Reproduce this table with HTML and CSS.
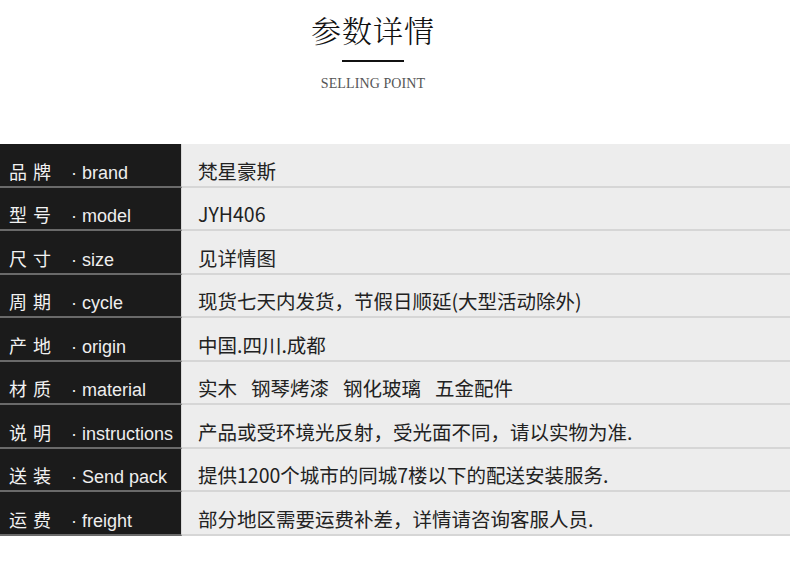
FILE: index.html
```html
<!DOCTYPE html>
<html lang="zh-CN">
<head>
<meta charset="utf-8">
<title>参数详情</title>
<link rel="stylesheet" href="styles.css">
</head>
<body>
<header class="head">
  <h1 class="title">参数详情</h1>
  <div class="rule"></div>
  <p class="sub">SELLING POINT</p>
</header>
<section class="specs">
  <div class="row"><div class="key"><span class="cn">品牌</span><span class="en">· brand</span></div><div class="val">梵星豪斯</div></div>
  <div class="row"><div class="key"><span class="cn">型号</span><span class="en">· model</span></div><div class="val">JYH406</div></div>
  <div class="row"><div class="key"><span class="cn">尺寸</span><span class="en">· size</span></div><div class="val">见详情图</div></div>
  <div class="row"><div class="key"><span class="cn">周期</span><span class="en">· cycle</span></div><div class="val">现货七天内发货，节假日顺延(大型活动除外)</div></div>
  <div class="row"><div class="key"><span class="cn">产地</span><span class="en">· origin</span></div><div class="val">中国.四川.成都</div></div>
  <div class="row"><div class="key"><span class="cn">材质</span><span class="en">· material</span></div><div class="val"><span class="item">实木</span><span class="item">钢琴烤漆</span><span class="item">钢化玻璃</span><span class="item">五金配件</span></div></div>
  <div class="row"><div class="key"><span class="cn">说明</span><span class="en">· instructions</span></div><div class="val">产品或受环境光反射，受光面不同，请以实物为准.</div></div>
  <div class="row"><div class="key"><span class="cn">送装</span><span class="en">· Send pack</span></div><div class="val">提供1200个城市的同城7楼以下的配送安装服务.</div></div>
  <div class="row"><div class="key"><span class="cn">运费</span><span class="en">· freight</span></div><div class="val">部分地区需要运费补差，详情请咨询客服人员.</div></div>
</section>
</body>
</html>
```

FILE: styles.css
```css
* { box-sizing: border-box; }
html, body { margin: 0; padding: 0; background: #fff; }
body {
  width: 790px;
  font-family: "Liberation Sans", "Noto Sans CJK SC", sans-serif;
}
.head {
  width: 746px;
  display: flex;
  flex-direction: column;
  align-items: center;
  padding-top: 12px;
}
.title {
  margin: 0;
  font-family: "Noto Serif CJK SC", "Noto Sans CJK SC", serif;
  font-weight: 300;
  font-size: 30px;
  line-height: 34px;
  color: #111;
  letter-spacing: 1px;
}
.rule {
  width: 62px;
  height: 2px;
  background: #111;
  margin-top: 14px;
}
.sub {
  margin: 14px 0 0;
  font-family: "Liberation Serif", serif;
  font-size: 14px;
  line-height: 16px;
  letter-spacing: 0.1px;
  color: #555;
}
.specs {
  margin-top: 52px;
  display: flex;
  flex-direction: column;
}
.row {
  display: grid;
  grid-template-columns: 182px 1fr;
  height: 43.5px;
}
.key {
  background: #1b1b1b;
  border-right: 1px solid #d8d8d8;
  border-bottom: 2px solid #6a6a6a;
  color: #f2f2f2;
  display: flex;
  align-items: flex-end;
  padding: 0 0 3px 9px;
  line-height: 20px;
}
.cn {
  width: 62px;
  font-family: "Noto Sans CJK SC", sans-serif;
  font-weight: 400;
  font-size: 18px;
  letter-spacing: 6px;
  position: relative;
  top: -2px;
}
.en {
  font-size: 18px;
  color: #eeeeee;
}
.val {
  background: #ededed;
  border-bottom: 2px solid #d6d6d6;
  color: #222;
  font-family: "Noto Sans CJK SC", sans-serif;
  font-size: 19.5px;
  line-height: 22px;
  display: flex;
  align-items: flex-end;
  gap: 14px;
  padding: 0 0 4px 16px;
  white-space: nowrap;
}
```
